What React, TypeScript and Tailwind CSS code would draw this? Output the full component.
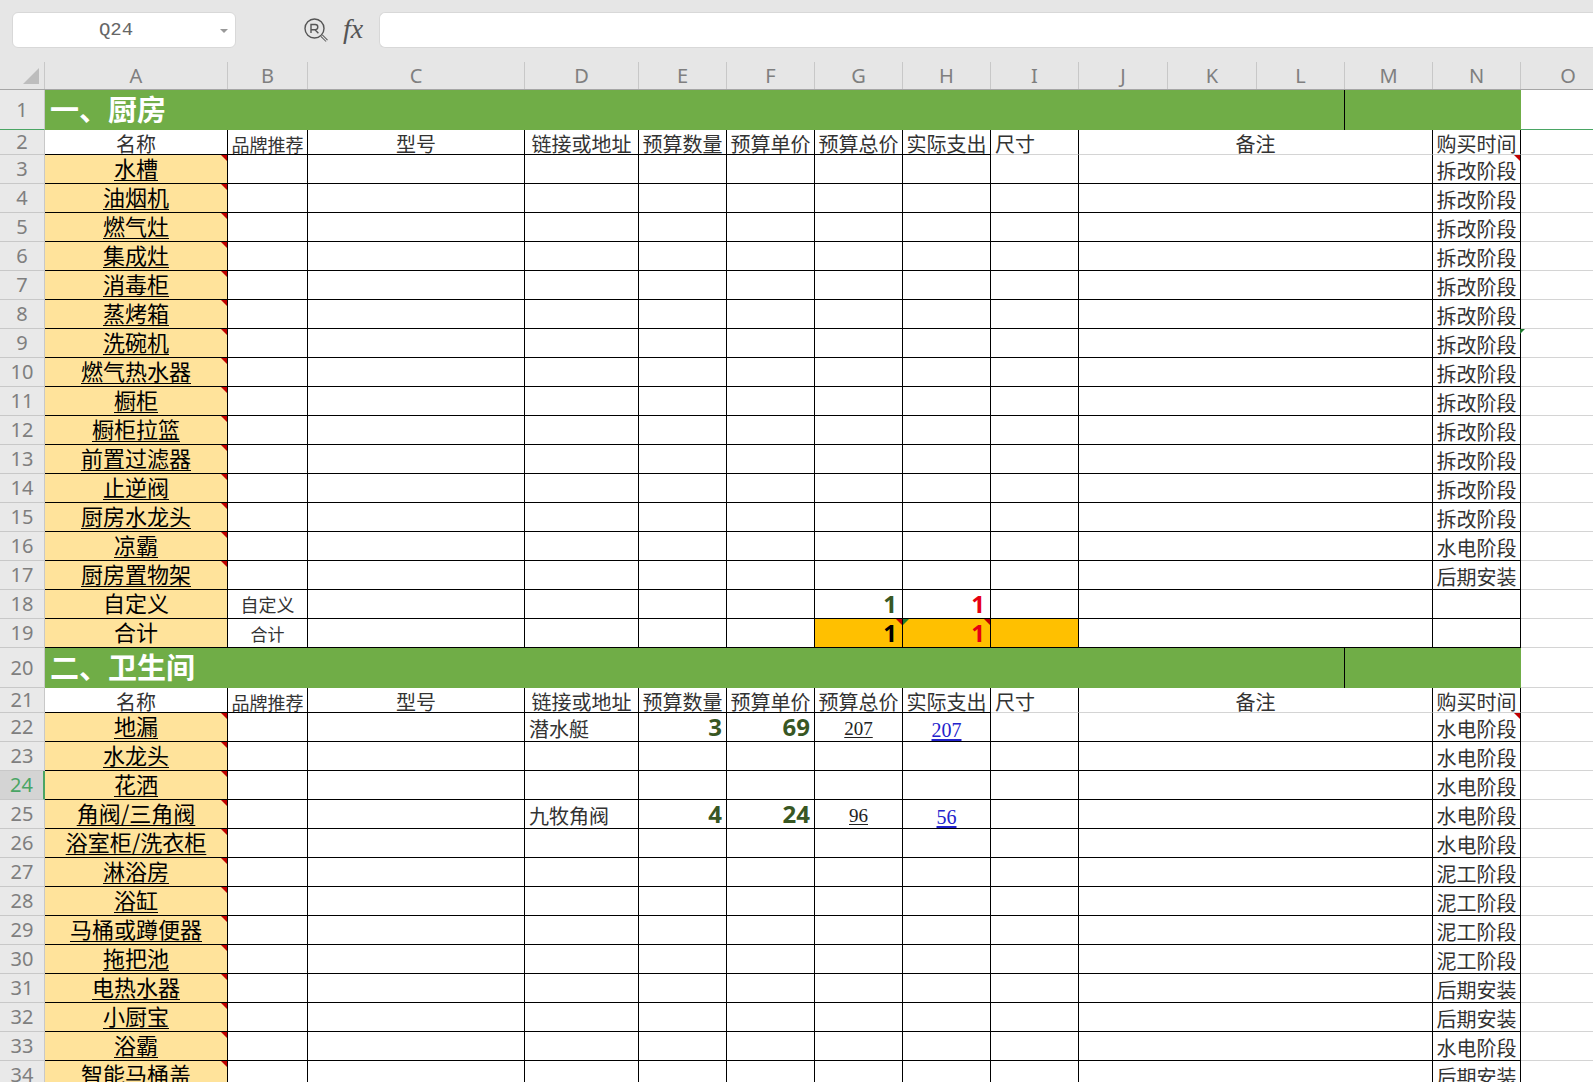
const GRID = "grid grid-cols-[45px_183px_80px_217px_114px_88px_88px_88px_88px_88px_89px_89px_88px_88px_88px_95px]"
const CJK = "font-['Noto_Sans_CJK_SC','Noto_Sans',sans-serif]"
const NUM = "font-['Open_Sans','Noto_Sans',sans-serif]"

const COLUMNS = ["A", "B", "C", "D", "E", "F", "G", "H", "I", "J", "K", "L", "M", "N", "O"]

const KITCHEN = [
    ["水槽", "拆改阶段"],
    ["油烟机", "拆改阶段"],
    ["燃气灶", "拆改阶段"],
    ["集成灶", "拆改阶段"],
    ["消毒柜", "拆改阶段"],
    ["蒸烤箱", "拆改阶段"],
    ["洗碗机", "拆改阶段"],
    ["燃气热水器", "拆改阶段"],
    ["橱柜", "拆改阶段"],
    ["橱柜拉篮", "拆改阶段"],
    ["前置过滤器", "拆改阶段"],
    ["止逆阀", "拆改阶段"],
    ["厨房水龙头", "拆改阶段"],
    ["凉霸", "水电阶段"],
    ["厨房置物架", "后期安装"],
]

const BATHROOM = [
    ["地漏", "水电阶段"],
    ["水龙头", "水电阶段"],
    ["花洒", "水电阶段"],
    ["角阀/三角阀", "水电阶段"],
    ["浴室柜/洗衣柜", "水电阶段"],
    ["淋浴房", "泥工阶段"],
    ["浴缸", "泥工阶段"],
    ["马桶或蹲便器", "泥工阶段"],
    ["拖把池", "泥工阶段"],
    ["电热水器", "后期安装"],
    ["小厨宝", "后期安装"],
    ["浴霸", "水电阶段"],
    ["智能马桶盖", "后期安装"],
]

const PRODUCTS: Record<string, { link: string; qty: string; price: string; total: string; spent: string }> = {
    地漏: { link: "潜水艇", qty: "3", price: "69", total: "207", spent: "207" },
    "角阀/三角阀": { link: "九牧角阀", qty: "4", price: "24", total: "96", spent: "56" },
}

function Corner({ green }: { green?: boolean }) {
    return green ? (
        <span className="absolute top-0 left-0 w-[6px] h-[6px] bg-[#1e7a2e] [clip-path:polygon(0_0,100%_0,0_100%)]" />
    ) : (
        <span className="absolute top-0 right-0 w-[6px] h-[6px] bg-[#c00000] [clip-path:polygon(0_0,100%_0,100%_100%)]" />
    )
}

function RowHead({ n, active, green }: { n: number; active?: boolean; green?: boolean }) {
    if (active) {
        return (
            <div className="flex items-center justify-center bg-[#d4d4d4] border-r-2 border-r-[#4aa564] border-b border-b-[#c8c8c8] text-[20px] leading-none text-[#4aa564] font-['Noto_Sans',sans-serif]">
                {n}
            </div>
        )
    }
    return (
        <div className={`flex items-center justify-center bg-[#e9e9e9] border-r border-r-[#c8c8c8] border-b text-[20px] leading-none text-[#7f7f7f] font-['Noto_Sans',sans-serif] ${green ? "border-b-[#4aa564]" : "border-b-[#c8c8c8]"}`}>
            {n}
        </div>
    )
}

function Section({ n, title }: { n: number; title: string }) {
    return (
        <div className={`${GRID} h-[40px]`}>
            <RowHead n={n} green={n === 1} />
            <div className={`col-span-12 flex items-center pl-[5px] pb-[3px] bg-[#70ad47] border-r border-r-black text-white text-[29px] font-bold leading-none ${CJK}`}>
                {title}
            </div>
            <div className="col-span-2 bg-[#70ad47]" />
            <div className={n === 1 ? "border-b border-b-[#4aa564]" : "border-b border-b-[#d4d4d4]"} />
        </div>
    )
}

function TitleRow({ n }: { n: number }) {
    const head = `flex items-center justify-center pt-[3px] whitespace-nowrap border-r border-r-black border-b border-b-black leading-[20px] text-[#333] ${CJK}`
    const soft = `flex items-center pt-[3px] whitespace-nowrap border-r border-r-black border-b border-b-[#d4d4d4] text-[20px] leading-[20px] text-[#333] ${CJK}`
    return (
        <div className={`${GRID} h-[25px]`}>
            <RowHead n={n} />
            <div className={`${head} text-[20px]`}>名称</div>
            <div className={`${head} text-[18px]`}>品牌推荐</div>
            <div className={`${head} text-[20px]`}>型号</div>
            <div className={`${head} text-[20px]`}>链接或地址</div>
            <div className={`${head} text-[20px]`}>预算数量</div>
            <div className={`${head} text-[20px]`}>预算单价</div>
            <div className={`${head} text-[20px]`}>预算总价</div>
            <div className={`${head} text-[20px]`}>实际支出</div>
            <div className={`${soft} justify-start pl-[4px]`}>尺寸</div>
            <div className={`${soft} col-span-4 justify-center`}>备注</div>
            <div className={`${soft} justify-center`}>购买时间</div>
            <div className="border-b border-b-[#d4d4d4]" />
        </div>
    )
}

function ItemRow({ n, name, time, active, plain, note, size, bTotal, bSpent, orange, black }: {
    n: number
    name: string
    time?: string
    active?: boolean
    plain?: boolean
    note?: string
    size?: number
    bTotal?: string
    bSpent?: string
    orange?: boolean
    black?: boolean
}) {
    const cell = "relative border-r border-r-black border-b border-b-black"
    const product = PRODUCTS[name]
    const fill = orange ? "bg-[#ffc000]" : ""
    return (
        <div className={`${GRID} h-[29px]`}>
            <RowHead n={n} active={active} />
            <div className={`${cell} flex items-center justify-center pb-[4px] bg-[#ffe39b] text-[22px] leading-none text-black whitespace-nowrap ${CJK}`}>
                <span className={plain ? "" : "underline underline-offset-[3px] decoration-1"}>{name}</span>
                {!plain && <Corner />}
            </div>
            <div className={`${cell} flex items-center justify-center text-[#333] leading-none ${CJK} ${size === 17 ? "text-[17px]" : "text-[18px]"}`}>{note}</div>
            <div className={cell} />
            <div className={`${cell} flex items-end pb-[2px] pl-[4px] text-[20px] leading-none text-[#333] ${CJK}`}>{product?.link}</div>
            <div className={`${cell} flex items-center justify-end pr-[4px] text-[24px] font-bold leading-none text-[#385723] ${NUM}`}>{product?.qty}</div>
            <div className={`${cell} flex items-center justify-end pr-[4px] text-[24px] font-bold leading-none text-[#385723] ${NUM}`}>{product?.price}</div>
            {product ? (
                <div className={`${cell} flex items-center justify-center pt-[3px] text-[19px] leading-none text-[#222] font-['Liberation_Serif',serif]`}>
                    <span className="underline underline-offset-[2px]">{product.total}</span>
                </div>
            ) : (
                <div className={`${cell} ${fill} flex items-center justify-end pr-[5px] text-[24px] font-bold leading-none ${NUM} ${black ? "text-black" : "text-[#385723]"}`}>
                    {bTotal}
                    {orange && <Corner />}
                </div>
            )}
            {product ? (
                <div className={`${cell} flex items-center justify-center pt-[6px] text-[20px] leading-none text-[#2222cc] font-['Liberation_Serif',serif]`}>
                    <span className="underline underline-offset-[2px]">{product.spent}</span>
                </div>
            ) : (
                <div className={`${cell} ${fill} flex items-center justify-end pr-[5px] text-[24px] font-bold leading-none text-[#e60012] ${NUM}`}>
                    {bSpent}
                    {orange && <Corner />}
                    {orange && <Corner green />}
                </div>
            )}
            <div className={`${cell} ${fill}`} />
            <div className={`${cell} col-span-4`} />
            <div className={`${cell} flex items-center justify-center text-[20px] leading-none text-[#333] whitespace-nowrap pt-[3px] ${CJK}`}>
                {time}
                {n === 3 && <Corner />}
                {n === 22 && <Corner />}
                {n === 9 && <span className="absolute top-0 right-[-5px] z-10 w-[5px] h-[5px] bg-[#1e7a2e] [clip-path:polygon(0_0,100%_0,0_100%)]" />}
            </div>
            <div className="border-b border-b-[#d4d4d4]" />
        </div>
    )
}

function FormulaBar() {
    return (
        <div className="h-[62px] flex items-start pt-[12px] bg-[#e6e6e6]">
            <div className="relative ml-[12px] w-[224px] h-[36px] flex items-center justify-center pr-[16px] rounded-[6px] bg-white border border-[#d8d8d8] text-[19px] text-[#666] font-['Liberation_Mono',monospace]">
                Q24
                <span className="absolute right-[7px] top-[16px] w-0 h-0 border-x-[4px] border-x-transparent border-t-[4px] border-t-[#999]" />
            </div>
            <svg className="ml-[68px] mt-[6px]" width="25" height="25" viewBox="0 0 25 25" fill="none" stroke="#555" strokeWidth="1.4">
                <circle cx="10.5" cy="10.5" r="9.5" />
                <path d="M7 15V6.5h4.2a2.6 2.6 0 0 1 0 5.2H7M11 11.7l3.4 3.5" />
                <path d="M17.6 17.6l5.2 5.2" strokeWidth="3" stroke="#555" />
                <path d="M17.6 17.6l5.2 5.2" strokeWidth="1.2" stroke="#e6e6e6" />
            </svg>
            <span className="ml-[14px] w-[24px] text-[28px] leading-[34px] italic text-[#555] font-['Liberation_Serif',serif]">fx</span>
            <div className="ml-[12px] flex-1 h-[36px] rounded-l-[6px] bg-white border border-r-0 border-[#d8d8d8]" />
        </div>
    )
}

function ColumnHeader() {
    return (
        <div className={`${GRID} h-[28px] bg-[#e6e6e6] border-b border-b-[#a6a6a6]`}>
            <div className="relative border-r border-r-[#c8c8c8]">
                <span className="absolute left-[23px] top-[6px] w-[16px] h-[16px] bg-[#bdbdbd] [clip-path:polygon(100%_0,100%_100%,0_100%)]" />
            </div>
            {COLUMNS.map((c) => (
                <div key={c} className="flex items-center justify-center border-r border-r-[#c8c8c8] text-[20px] leading-none text-[#7f7f7f] font-['Noto_Sans',sans-serif]">
                    {c}
                </div>
            ))}
        </div>
    )
}

export default function App() {
    return (
        <div className="w-[1593px] h-[1082px] overflow-hidden bg-white">
            <FormulaBar />
            <ColumnHeader />
            <Section n={1} title="一、厨房" />
            <TitleRow n={2} />
            {KITCHEN.map(([name, time], i) => (
                <ItemRow key={name} n={i + 3} name={name} time={time} />
            ))}
            <ItemRow n={18} name="自定义" plain note="自定义" bTotal="1" bSpent="1" />
            <ItemRow n={19} name="合计" plain note="合计" size={17} bTotal="1" bSpent="1" orange black />
            <Section n={20} title="二、卫生间" />
            <TitleRow n={21} />
            {BATHROOM.map(([name, time], i) => (
                <ItemRow key={name} n={i + 22} name={name} time={time} active={i + 22 === 24} />
            ))}
        </div>
    )
}
